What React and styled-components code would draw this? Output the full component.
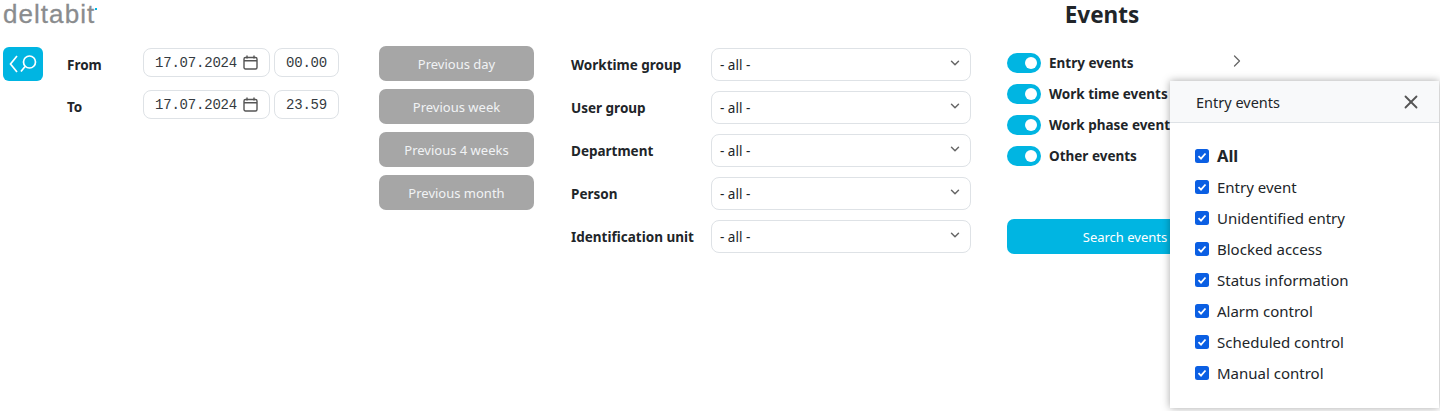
import React from "react";
import styled, { createGlobalStyle } from "styled-components";
import { ChevronDown, ChevronRight, X } from "lucide-react";

const GlobalStyle = createGlobalStyle`
  html, body {
    margin: 0;
    height: 100%;
    overflow: hidden;
    background: #fff;
    font-family: "Noto Sans", "Open Sans", sans-serif;
    color: #212529;
  }
`;

const CYAN = "#00b5e2";

const Page = styled.div`
  position: relative;
  width: 1440px;
  height: 411px;
  display: flex;
  padding-left: 3px;
  box-sizing: border-box;
`;

const Left = styled.div`
  width: 1004px;
  flex-shrink: 0;
`;

const Logo = styled.div`
  height: 46px;
  font-family: "Liberation Sans", sans-serif;
  font-size: 26px;
  line-height: 28px;
  letter-spacing: 1.05px;
  -webkit-text-stroke: 0.3px #8a8c8e;
  color: #8a8c8e;
  display: flex;
  align-items: flex-start;
`;

const LogoDot = styled.span`
  width: 2px;
  height: 2px;
  margin: 8px 0 0 0;
  background: ${CYAN};
`;

const Filters = styled.div`
  display: flex;
  align-items: flex-start;
`;

const SearchToggle = styled.button`
  width: 40px;
  height: 34px;
  margin-top: 1px;
  padding: 0;
  border: none;
  border-radius: 6px;
  background: ${CYAN};
  display: flex;
  align-items: center;
  justify-content: center;
`;

const DateGrid = styled.div`
  display: grid;
  grid-template-columns: 76px 127px 69px;
  row-gap: 13px;
  margin: 2px 0 0 24px;
  align-items: center;
`;

const FieldLabel = styled.label`
  font-size: 13.5px;
  font-weight: 700;
  white-space: nowrap;
  padding-top: ${(p) => (p.$low ? "5px" : 0)};
`;

const DateBox = styled.div`
  height: 29px;
  box-sizing: border-box;
  border: 1px solid #dee2e6;
  border-radius: 8px;
  display: flex;
  align-items: center;
  justify-content: ${(p) => (p.$time ? "center" : "flex-start")};
  gap: 6px;
  padding-left: ${(p) => (p.$time ? 0 : "11px")};
  margin-left: ${(p) => (p.$time ? "4px" : 0)};
  font-family: "Liberation Mono", monospace;
  font-size: 14px;
  letter-spacing: -0.2px;
  color: #343a40;
`;

const QuickColumn = styled.div`
  width: 155px;
  margin: 0 37px 0 40px;
  display: flex;
  flex-direction: column;
  gap: 8px;
`;

const QuickButton = styled.button`
  height: 35px;
  padding: 0;
  border: none;
  border-radius: 7px;
  background: #a6a6a6;
  color: #f1f3f5;
  font-family: inherit;
  font-size: 13px;
`;

const SelectGrid = styled.div`
  display: grid;
  grid-template-columns: 140px 260px;
  row-gap: 10px;
  margin-top: 2px;
  align-items: center;
`;

const SelectBox = styled.div`
  height: 33px;
  box-sizing: border-box;
  border: 1px solid #dee2e6;
  border-radius: 8px;
  padding: 0 8px 0 8px;
  display: flex;
  align-items: center;
  justify-content: space-between;
  font-size: 13.5px;
  color: #212529;
`;

const SelectArrow = styled(ChevronDown)`
  color: #666;
  margin-top: -3px;
`;

const Right = styled.div`
  width: 236px;
  flex-shrink: 0;
`;

const Title = styled.h1`
  width: 190px;
  height: 53px;
  margin: 0;
  text-align: center;
  font-size: 22.5px;
  line-height: 30px;
  font-weight: 700;
`;

const ToggleRow = styled.div`
  display: flex;
  align-items: center;
  height: 20px;
  margin-bottom: 11px;
  position: relative;
`;

const Toggle = styled.span`
  width: 34px;
  height: 20px;
  box-sizing: border-box;
  padding-right: 4px;
  border-radius: 10px;
  background: ${CYAN};
  display: flex;
  align-items: center;
  justify-content: flex-end;
  &::after {
    content: "";
    width: 12px;
    height: 12px;
    border-radius: 50%;
    background: #fff;
  }
`;

const ToggleLabel = styled.span`
  margin-left: 8px;
  font-size: 13.5px;
  font-weight: 700;
  white-space: nowrap;
`;

const Expand = styled.span`
  margin-left: auto;
  display: flex;
  color: #666;
  transform: translate(4px, -2px);
`;

const SearchButton = styled.button`
  display: block;
  width: 236px;
  height: 35px;
  margin-top: 53px;
  padding: 0;
  border: none;
  border-radius: 7px;
  background: ${CYAN};
  color: #fff;
  font-family: inherit;
  font-size: 13px;
`;

const Popover = styled.div`
  position: absolute;
  left: 1170px;
  top: 81px;
  width: 269px;
  height: 327px;
  box-sizing: border-box;
  background: #fff;
  box-shadow: 0 0 8px rgba(0, 0, 0, 0.35);
`;

const PopoverHead = styled.div`
  height: 42px;
  box-sizing: border-box;
  padding: 0 17px 0 26px;
  background: #f8f9fa;
  border-bottom: 1px solid #dee2e6;
  display: flex;
  align-items: center;
  justify-content: space-between;
  font-size: 14.5px;
`;

const CloseIcon = styled(X)`
  color: #555;
`;

const PopoverBody = styled.div`
  padding: 17px 25px 0;
  display: flex;
  flex-direction: column;
`;

const CheckRow = styled.div`
  height: 31px;
  display: flex;
  align-items: center;
  gap: 8px;
  font-size: ${(p) => (p.$strong ? "16.5px" : "15px")};
  font-weight: ${(p) => (p.$strong ? 700 : 400)};
`;

const Check = styled.span`
  width: 14px;
  height: 14px;
  border-radius: 2.5px;
  background: #0b5fe3;
  display: flex;
  align-items: center;
  justify-content: center;
`;

const CalendarIcon = () => (
  <svg width="15" height="15" viewBox="0 0 15 15" fill="none" stroke="#555" strokeWidth="1.4">
    <rect x="1" y="2.5" width="13" height="11.5" rx="1.5" />
    <path d="M1 5.8h13M4 .5v3M11 .5v3" />
  </svg>
);

const LensIcon = () => (
  <svg width="32" height="26" viewBox="0 0 32 26" fill="none" stroke="#fff" strokeWidth="1.7">
    <path d="M10 5 3.5 13 10 21" />
    <circle cx="22.5" cy="11" r="6" />
    <path d="M18 15.5 14 20.5" />
  </svg>
);

const CheckMark = () => (
  <svg width="10" height="10" viewBox="0 0 10 10" fill="none" stroke="#fff" strokeWidth="1.8">
    <path d="M1.5 5.2 4 7.6 8.5 2.5" />
  </svg>
);

const dates = [
  { label: "From", time: "00.00" },
  { label: "To", time: "23.59" },
];
const quick = ["Previous day", "Previous week", "Previous 4 weeks", "Previous month"];
const selects = ["Worktime group", "User group", "Department", "Person", "Identification unit"];
const toggles = ["Entry events", "Work time events", "Work phase events", "Other events"];
const checks = [
  "Entry event",
  "Unidentified entry",
  "Blocked access",
  "Status information",
  "Alarm control",
  "Scheduled control",
  "Manual control",
];

export default function App() {
  return (
    <Page>
      <GlobalStyle />
      <Left>
        <Logo>
          deltabit
          <LogoDot />
        </Logo>
        <Filters>
          <SearchToggle>
            <LensIcon />
          </SearchToggle>
          <DateGrid>
            {dates.map((d) => (
              <React.Fragment key={d.label}>
                <FieldLabel $low>{d.label}</FieldLabel>
                <DateBox>
                  17.07.2024
                  <CalendarIcon />
                </DateBox>
                <DateBox $time>{d.time}</DateBox>
              </React.Fragment>
            ))}
          </DateGrid>
          <QuickColumn>
            {quick.map((q) => (
              <QuickButton key={q}>{q}</QuickButton>
            ))}
          </QuickColumn>
          <SelectGrid>
            {selects.map((s) => (
              <React.Fragment key={s}>
                <FieldLabel>{s}</FieldLabel>
                <SelectBox>
                  - all -
                  <SelectArrow size={14} strokeWidth={2.5} />
                </SelectBox>
              </React.Fragment>
            ))}
          </SelectGrid>
        </Filters>
      </Left>
      <Right>
        <Title>Events</Title>
        {toggles.map((t, i) => (
          <ToggleRow key={t}>
            <Toggle />
            <ToggleLabel>{t}</ToggleLabel>
            {i === 0 && (
              <Expand>
                <ChevronRight size={20} strokeWidth={1.5} />
              </Expand>
            )}
          </ToggleRow>
        ))}
        <SearchButton>Search events</SearchButton>
      </Right>
      <Popover>
        <PopoverHead>
          Entry events
          <CloseIcon size={22} strokeWidth={2} />
        </PopoverHead>
        <PopoverBody>
          <CheckRow $strong>
            <Check>
              <CheckMark />
            </Check>
            All
          </CheckRow>
          {checks.map((c) => (
            <CheckRow key={c}>
              <Check>
                <CheckMark />
              </Check>
              {c}
            </CheckRow>
          ))}
        </PopoverBody>
      </Popover>
    </Page>
  );
}
